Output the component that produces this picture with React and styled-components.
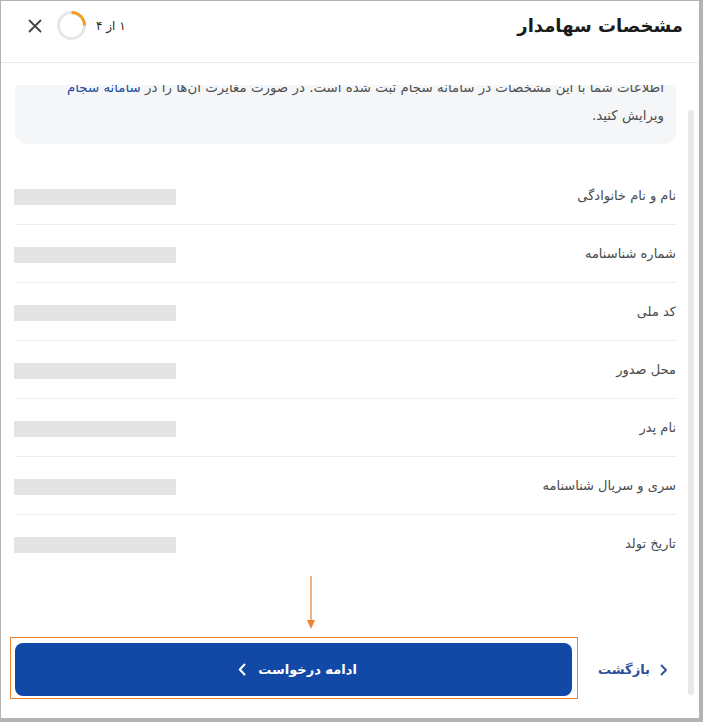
import { useLayoutEffect, useRef } from 'react';
import styled, { createGlobalStyle } from 'styled-components';

const GlobalStyle = createGlobalStyle`
  html, body { margin: 0; height: 100%; }
  body {
    background: #b3b3b3;
    padding: 1px 4px 4px 1px;
    box-sizing: border-box;
    font-family: "DejaVu Sans", "Noto Sans", sans-serif;
  }
  #root { height: 100%; }
`;

const Card = styled.div`
  position: relative;
  direction: rtl;
  height: 100%;
  background: #fff;
  display: flex;
  flex-direction: column;
  overflow: hidden;
`;

const Header = styled.header`
  height: 62px;
  box-sizing: border-box;
  flex-shrink: 0;
  padding: 0 16px 12px 27px;
  border-bottom: 1px solid #e6ebf1;
  display: flex;
  align-items: center;
  justify-content: space-between;
`;

const Title = styled.h1`
  margin: 0;
  font-size: 18px;
  font-weight: 700;
  color: #1b1b1b;
`;

const Steps = styled.div`
  display: flex;
  align-items: center;
`;

const StepText = styled.span`
  font-size: 12px;
  color: #2a2a2a;
  margin-left: 9px;
`;

const CloseButton = styled.button`
  border: 0;
  background: none;
  padding: 0;
  margin-right: 14px;
  display: flex;
  cursor: pointer;
`;

const Body = styled.div`
  flex: 1;
  min-height: 0;
  margin-top: 22px;
  overflow-y: auto;
  scrollbar-width: none;
  padding: 0 23px 0 14px;
  &::-webkit-scrollbar { display: none; }
`;

const Notice = styled.div`
  background: #f5f6f8;
  border-radius: 12px;
  padding: 14px 12px 14px 16px;
  font-size: 13.4px;
  line-height: 28px;
  color: #4f4f4f;
  white-space: nowrap;
`;

const Link = styled.a`
  color: #1d4c9f;
  text-decoration: none;
`;

const List = styled.div`
  margin-top: 23px;
  padding-bottom: 60px;
`;

const Row = styled.div`
  height: 58px;
  display: flex;
  align-items: center;
  justify-content: space-between;
  border-bottom: 1px solid ${(p) => (p.$last ? 'transparent' : '#eceef1')};
  box-sizing: border-box;
`;

const Label = styled.span`
  font-size: 13px;
  color: #4a4a4a;
`;

const Skeleton = styled.div`
  width: 162px;
  height: 16px;
  background: #e4e4e4;
  margin-left: -1px;
  margin-top: 2px;
`;

const Footer = styled.footer`
  flex-shrink: 0;
  display: flex;
  align-items: center;
  gap: 18px;
  padding: 16px 23px 22px 14px;
`;

const BackButton = styled.button`
  width: 86px;
  height: 53px;
  border: 0;
  background: none;
  display: flex;
  align-items: center;
  justify-content: center;
  gap: 10px;
  font-family: inherit;
  font-size: 13px;
  font-weight: 700;
  color: #2c4e9a;
  cursor: pointer;
`;

const PrimaryButton = styled.button`
  flex: 1;
  height: 53px;
  border: 0;
  border-radius: 8px;
  background: #1249a6;
  color: #fff;
  font-family: inherit;
  font-size: 13px;
  font-weight: 700;
  display: flex;
  align-items: center;
  justify-content: center;
  gap: 12px;
  padding: 0 0 0 8px;
  cursor: pointer;
`;

const ScrollThumb = styled.div`
  position: absolute;
  top: 109px;
  right: 5px;
  width: 6px;
  height: 585px;
  border-radius: 3px;
  background: #e6e8ec;
`;

const Highlight = styled.div`
  position: absolute;
  left: 9px;
  top: 636px;
  width: 568px;
  height: 62px;
  border: 1px solid #ee7f33;
  box-sizing: border-box;
  pointer-events: none;
`;

const Arrow = styled.svg`
  position: absolute;
  left: 304px;
  top: 575px;
  pointer-events: none;
`;

function ProgressRing({ step, total }) {
  const r = 13;
  const c = 2 * Math.PI * r;
  return (
    <svg width="31" height="31" viewBox="0 0 31 31">
      <circle cx="15.5" cy="15.5" r={r} fill="none" stroke="#e5e7eb" strokeWidth="3" />
      <circle
        cx="15.5"
        cy="15.5"
        r={r}
        fill="none"
        stroke="#f0a01e"
        strokeWidth="3"
        strokeDasharray={`${(c * step) / total} ${c}`}
        transform="rotate(-90 15.5 15.5)"
      />
    </svg>
  );
}

const fields = [
  'نام و نام خانوادگی',
  'شماره شناسنامه',
  'کد ملی',
  'محل صدور',
  'نام پدر',
  'سری و سریال شناسنامه',
  'تاریخ تولد',
];

export default function App() {
  const bodyRef = useRef(null);

  useLayoutEffect(() => {
    if (bodyRef.current) bodyRef.current.scrollTop = 25;
  }, []);

  return (
    <>
      <GlobalStyle />
      <Card>
        <Header>
          <Title>مشخصات سهامدار</Title>
          <Steps>
            <StepText>۱ از ۴</StepText>
            <ProgressRing step={1} total={4} />
            <CloseButton aria-label="بستن">
              <svg width="14" height="14" viewBox="0 0 14 14">
                <path d="M1.5 1.5l11 11M12.5 1.5l-11 11" stroke="#444" strokeWidth="1.8" strokeLinecap="round" />
              </svg>
            </CloseButton>
          </Steps>
        </Header>

        <Body ref={bodyRef}>
          <Notice>
            اطلاعات شما با این مشخصات در سامانه سجام ثبت شده است. در صورت مغایرت آن‌ها را در{' '}
            <Link href="#">سامانه سجام</Link>
            <br />
            ویرایش کنید.
          </Notice>
          <List>
            {fields.map((f, i) => (
              <Row key={f} $last={i === fields.length - 1}>
                <Label>{f}</Label>
                <Skeleton />
              </Row>
            ))}
          </List>
        </Body>

        <Footer>
          <BackButton>
            <svg width="8" height="12" viewBox="0 0 8 12">
              <path d="M1.5 1.5L6 6l-4.5 4.5" fill="none" stroke="#2c4e9a" strokeWidth="1.8" strokeLinecap="round" strokeLinejoin="round" />
            </svg>
            بازگشت
          </BackButton>
          <PrimaryButton>
            ادامه درخواست
            <svg width="8" height="13" viewBox="0 0 8 13">
              <path d="M6.5 1.5L1.8 6.5l4.7 5" fill="none" stroke="#fff" strokeWidth="2" strokeLinecap="round" strokeLinejoin="round" />
            </svg>
          </PrimaryButton>
        </Footer>

        <ScrollThumb />
        <Highlight />
        <Arrow width="12" height="54" viewBox="0 0 12 54">
          <line x1="6" y1="0" x2="6" y2="45" stroke="#ee7f33" strokeWidth="1.2" />
          <path d="M2 44h8l-4 9z" fill="#ee7f33" />
        </Arrow>
      </Card>
    </>
  );
}
